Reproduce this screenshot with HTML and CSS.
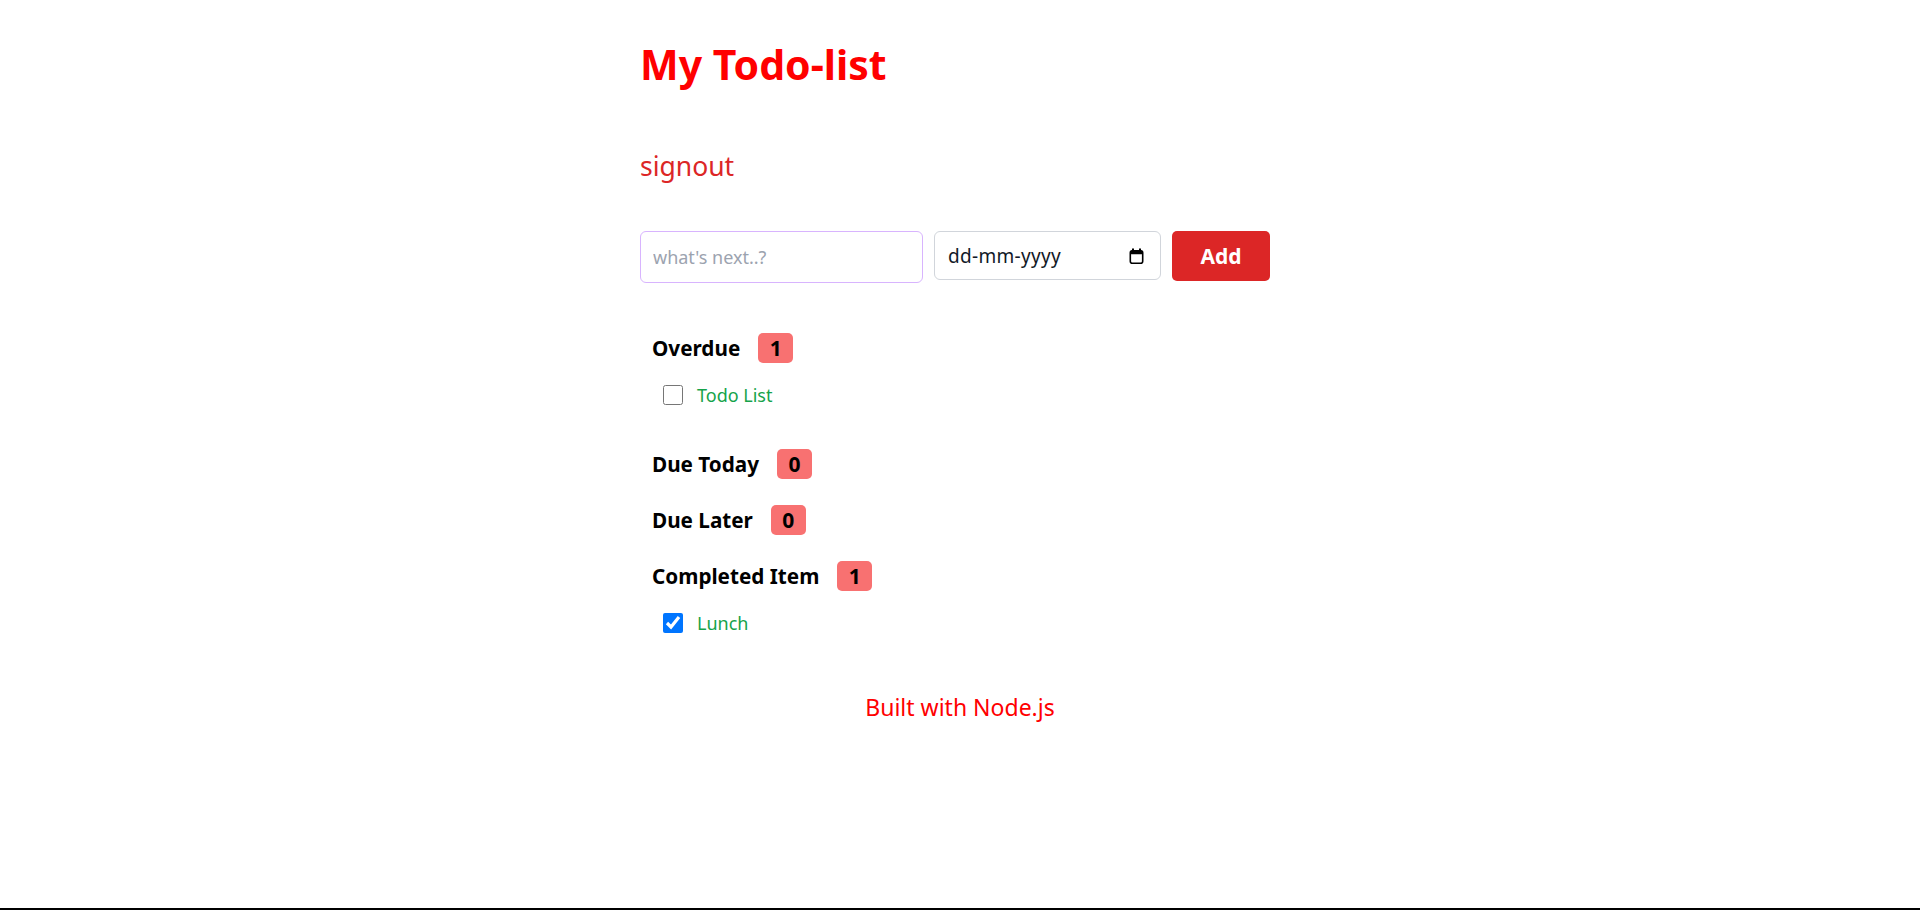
FILE: index.html
```html
<!DOCTYPE html>
<html lang="en">
<head>
<meta charset="utf-8">
<title>My Todo-list</title>
<link rel="stylesheet" href="styles.css">
</head>
<body>
<main class="page">
  <div class="container">
    <h1 class="title">My Todo-list</h1>
    <a class="signout" href="#">signout</a>
    <form class="todo-form">
      <input class="text-input" type="text" placeholder="what's next..?">
      <div class="date-input">
        <span class="date-text">dd-mm-yyyy</span>
        <svg class="cal-icon" width="15" height="16" viewBox="0 0 15 16" aria-hidden="true">
          <rect x="3" y="0.5" width="2" height="3" fill="#000"/>
          <rect x="10" y="0.5" width="2" height="3" fill="#000"/>
          <rect x="1.3" y="2.8" width="12.4" height="12.4" rx="2" fill="none" stroke="#000" stroke-width="1.6"/>
          <rect x="1" y="2.5" width="13" height="3.8" rx="1.5" fill="#000"/>
        </svg>
      </div>
      <button class="add-btn" type="button">Add</button>
    </form>

    <section class="group">
      <h2 class="group-head"><span>Overdue</span><span class="badge">1</span></h2>
      <ul class="items">
        <li class="item"><input class="check" type="checkbox"><span class="item-text">Todo List</span></li>
      </ul>
    </section>

    <section class="group">
      <h2 class="group-head"><span>Due Today</span><span class="badge">0</span></h2>
    </section>

    <section class="group">
      <h2 class="group-head"><span>Due Later</span><span class="badge">0</span></h2>
    </section>

    <section class="group">
      <h2 class="group-head"><span>Completed Item</span><span class="badge">1</span></h2>
      <ul class="items">
        <li class="item"><input class="check" type="checkbox" checked><span class="item-text">Lunch</span></li>
      </ul>
    </section>
  </div>
  <footer class="footer">Built with Node.js</footer>
</main>
</body>
</html>
```

FILE: styles.css
```css
* { box-sizing: border-box; }
html, body { margin: 0; padding: 0; }
body {
  font-family: "Noto Sans", "Open Sans", sans-serif;
  color: #000;
  background: #fff;
  min-height: 100vh;
  border-bottom: 2px solid #000;
}
.page { padding-top: 34px; }
.container {
  width: 640px;
  margin: 0 auto;
}
.title {
  margin: 0;
  font-size: 41px;
  line-height: 60px;
  font-weight: 700;
  color: #ff0000;
}
.signout {
  display: block;
  width: fit-content;
  margin-top: 54px;
  font-size: 26.5px;
  line-height: 36px;
  color: #dc2626;
  text-decoration: none;
}
.todo-form {
  display: flex;
  align-items: flex-start;
  gap: 11px;
  margin-top: 47px;
}
.text-input {
  width: 283px;
  height: 52px;
  border: 1.5px solid #d8b4fe;
  border-radius: 6px;
  padding: 0 12px;
  font-family: inherit;
  font-size: 18px;
  color: #111;
  outline: none;
}
.text-input::placeholder { color: #9ca3af; }
.date-input {
  width: 227px;
  height: 49px;
  border: 1px solid #d1d5db;
  border-radius: 6px;
  padding: 0 16px 0 13px;
  display: flex;
  align-items: center;
  justify-content: space-between;
}
.date-text {
  font-size: 19px;
  color: #111827;
  letter-spacing: 0.3px;
}
.cal-icon { display: block; }
.add-btn {
  width: 98px;
  height: 50px;
  border: 0;
  border-radius: 5px;
  background: #dc2626;
  color: #fff;
  font-family: inherit;
  font-size: 21px;
  font-weight: 700;
}
.group { padding-left: 12px; }
.group-head {
  margin: 0;
  display: flex;
  align-items: center;
  gap: 18px;
  font-size: 20.7px;
  font-weight: 700;
  line-height: 30px;
  height: 30px;
}
.group:nth-of-type(1) { margin-top: 50px; }
.group + .group { margin-top: 26px; }
.badge {
  display: inline-flex;
  align-items: center;
  justify-content: center;
  width: 35px;
  height: 30px;
  border-radius: 5px;
  background: #f87171;
  font-size: 21px;
}
.items {
  list-style: none;
  margin: 22px 0 0;
  padding: 0 0 18px 11px;
}
.item {
  display: flex;
  align-items: center;
  gap: 14px;
  height: 20px;
}
.check {
  width: 20px;
  height: 20px;
  margin: 0;
}
.item-text {
  font-size: 18px;
  color: #16a34a;
}
.footer {
  text-align: center;
  margin-top: 40px;
  font-size: 23px;
  color: #ff0000;
}
```
